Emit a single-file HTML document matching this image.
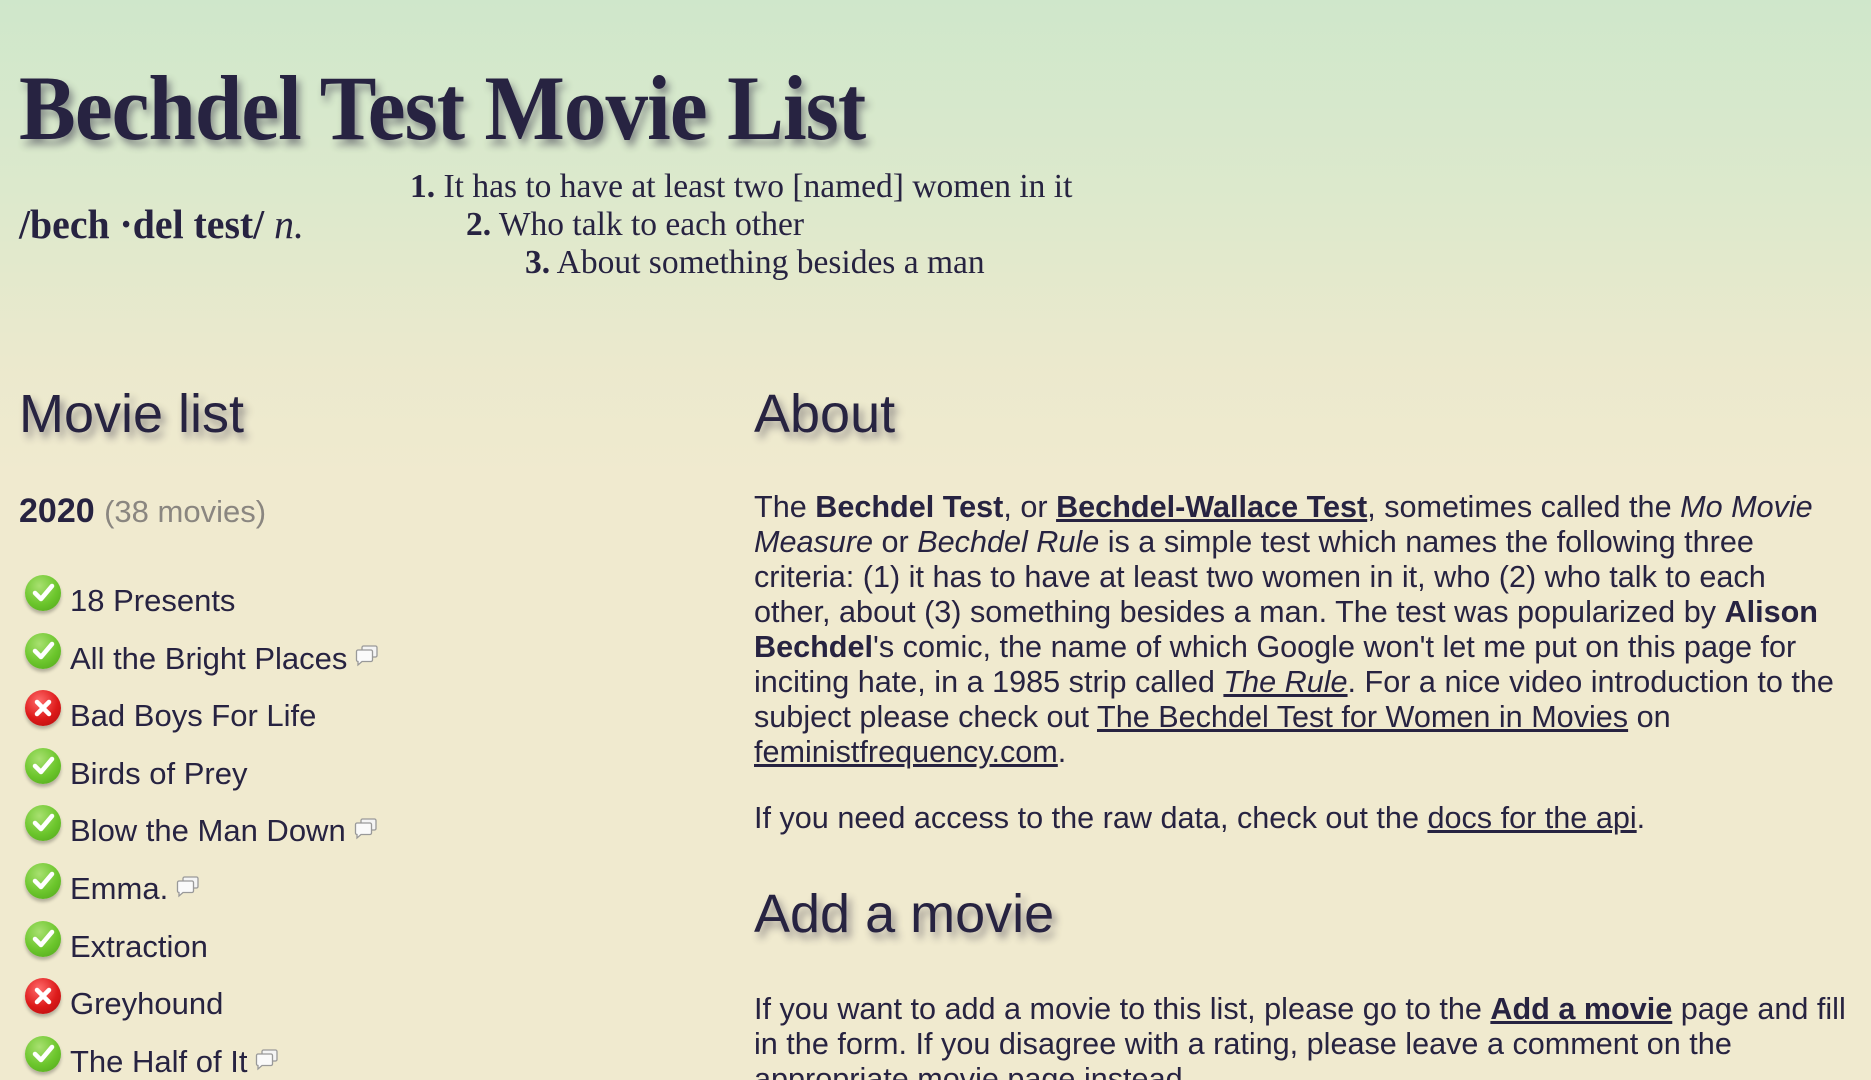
<!DOCTYPE html>
<html><head><meta charset="utf-8"><style>
html{margin:0;padding:0;height:1080px;overflow:hidden;background:linear-gradient(180deg,#cfe7cb 0px,#dde9cc 200px,#ebe9cd 360px,#f0eacf 480px,#f0eacf 1080px) no-repeat;background-size:1871px 1080px}
body{margin:0;padding:0;width:1871px;height:1080px;overflow:hidden;position:relative;color:#272341;font-family:"Liberation Sans",sans-serif;background:transparent}
.abs{position:absolute;white-space:nowrap}
.shadow{text-shadow:4px 6px 8px rgba(40,35,60,0.45)}
h1{margin:0;font-family:"Liberation Serif",serif;font-weight:bold;font-size:92px;transform:scaleX(0.925);transform-origin:left top;letter-spacing:-1px;white-space:nowrap}
.serif{font-family:"Liberation Serif",serif}
.h2{font-size:54px}
.item{position:absolute;left:25px;font-size:31px;height:40px;white-space:nowrap}
.ic{position:absolute;left:0;top:0;width:36px;height:36px;border-radius:50%;box-shadow:0 3px 3px rgba(0,0,0,0.25)}
.ok{background:radial-gradient(circle at 40% 30%,#a8e070,#6cc62c 55%,#4ea41a)}
.no{background:radial-gradient(circle at 40% 30%,#ff6a6a,#dd1a1a 55%,#b00c0c)}
.ic svg{position:absolute;left:0;top:0}
.t{position:absolute;left:45px;top:8px;white-space:nowrap}
.cm{display:inline-block;vertical-align:middle;margin-left:8px;margin-top:-8px}
.body{font-size:30.6px;line-height:35px}
a{color:#272341;text-decoration:underline}
</style></head><body>
<div class="abs shadow" style="left:19px;top:55px"><h1>Bechdel Test Movie List</h1></div>
<div class="abs serif" style="left:19px;top:200px;font-size:41px;font-weight:bold;transform:scaleX(0.97);transform-origin:left top">/bech ·del test/ <i style="font-weight:normal">n.</i></div>
<div class="abs serif" style="left:410px;top:168px;font-size:33.5px"><b>1.</b> It has to have at least two [named] women in it</div>
<div class="abs serif" style="left:466px;top:206px;font-size:33.5px"><b>2.</b> Who talk to each other</div>
<div class="abs serif" style="left:525px;top:244px;font-size:33.5px"><b>3.</b> About something besides a man</div>

<div class="abs shadow h2" style="left:19px;top:383px">Movie list</div>
<div class="abs" style="left:19px;top:492px;font-size:34px"><b>2020</b> <span style="color:#8a8680;font-size:31px">(38 movies)</span></div>

<div id="list"></div>

<div class="abs shadow h2" style="left:754px;top:383px">About</div>
<div class="abs body" style="left:754px;top:490px">
The <b>Bechdel Test</b>, or <a href="#"><b>Bechdel-Wallace Test</b></a>, sometimes called the <i>Mo Movie</i><br>
<i>Measure</i> or <i>Bechdel Rule</i> is a simple test which names the following three<br>
criteria: (1) it has to have at least two women in it, who (2) who talk to each<br>
other, about (3) something besides a man. The test was popularized by <b>Alison</b><br>
<b>Bechdel</b>'s comic, the name of which Google won't let me put on this page for<br>
inciting hate, in a 1985 strip called <a href="#"><i>The Rule</i></a>. For a nice video introduction to the<br>
subject please check out <a href="#">The Bechdel Test for Women in Movies</a> on<br>
<a href="#">feministfrequency.com</a>.</div>
<div class="abs body" style="left:754px;top:801px">If you need access to the raw data, check out the <a href="#">docs for the api</a>.</div>
<div class="abs shadow h2" style="left:754px;top:883px">Add a movie</div>
<div class="abs body" style="left:754px;top:992px">If you want to add a movie to this list, please go to the <a href="#"><b>Add a movie</b></a> page and fill<br>
in the form. If you disagree with a rating, please leave a comment on the<br>
appropriate movie page instead.</div>

<script>
var items=[["18 Presents",1,0],["All the Bright Places",1,1],["Bad Boys For Life",0,0],["Birds of Prey",1,0],["Blow the Man Down",1,1],["Emma.",1,1],["Extraction",1,0],["Greyhound",0,0],["The Half of It",1,1]];
var chk='<svg width="36" height="36" viewBox="0 0 36 36"><path d="M10 18 L16 24 L27 11" fill="none" stroke="#fff" stroke-width="4.5" stroke-linecap="round" stroke-linejoin="round"/></svg>';
var x='<svg width="36" height="36" viewBox="0 0 36 36"><path d="M12 12 L24 24 M24 12 L12 24" fill="none" stroke="#fff" stroke-width="4.5" stroke-linecap="round"/></svg>';
var cm='<svg class="cm" width="24" height="22" viewBox="0 0 24 22"><rect x="7" y="1" width="15" height="11" rx="1.5" fill="#f4f4f4" stroke="#999" stroke-width="1.3"/><path d="M3 5 H16 a1.5 1.5 0 0 1 1.5 1.5 V15 a1.5 1.5 0 0 1 -1.5 1.5 H7 L3 20 V16.5 a1.5 1.5 0 0 1 -1.5 -1.5 V6.5 A1.5 1.5 0 0 1 3 5Z" fill="#fafafa" stroke="#999" stroke-width="1.3"/></svg>';
var h='';
items.forEach(function(it,i){
 h+='<div class="item" style="top:'+(575+i*57.6)+'px"><div class="ic '+(it[1]?'ok':'no')+'">'+(it[1]?chk:x)+'</div><div class="t">'+it[0]+(it[2]?cm:'')+'</div></div>';
});
document.getElementById('list').innerHTML=h;
</script>
</body></html>
